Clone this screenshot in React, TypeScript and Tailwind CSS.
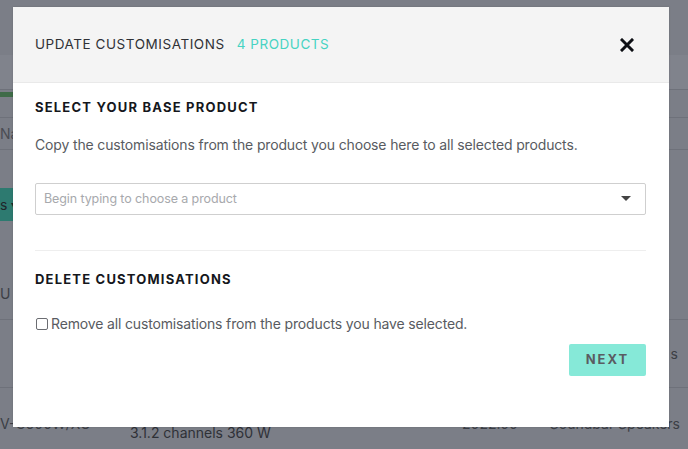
import React from "react";

export default function App() {
  return (
    <div className="relative w-[688px] h-[449px] overflow-hidden bg-[#7b7e87]" style={{ fontFamily: "Inter, 'Noto Sans', sans-serif" }}>
      {/* dimmed page behind */}
      <div className="flex flex-col text-[#3c3e45]">
        <div className="h-[55px]" />
        <div className="h-[35px] bg-[#80838c] border-b border-[#6e717a]" />
        <div className="h-[28px] border-b border-[#6e717a] relative">
          <div className="w-[13px] h-[5px] bg-[#3f6b48] mt-[2px]" />
        </div>
        <div className="h-[32px] border-b border-[#6e717a] flex items-center text-[14px] text-[#4a4c53]">
          <span>Na</span>
        </div>
        <div className="h-[38px]" />
        <div className="h-[33px] w-[20px] bg-[#2d7a70] flex items-center text-[14px] text-[#20252a]">
          <span>s ▾</span>
        </div>
        <div className="h-[60px]" />
        <div className="h-[25px] flex items-center text-[14px]">
          <span>U</span>
        </div>
        <div className="h-[14px] border-b border-[#6e717a]" />
        <div className="h-[68px] border-b border-[#6e717a] flex items-center justify-end text-[14px]">
          <span className="mr-[10px]">s</span>
        </div>
        <div className="h-[61px] flex items-start text-[14px] pt-[25px]">
          <span className="w-[130px]">V-C600W/XU</span>
          <span className="mt-[9px] text-[#2f3137]">3.1.2 channels 360 W</span>
          <span className="ml-auto">2022.00</span>
          <span className="ml-[32px] mr-[8px]">Soundbar Speakers</span>
        </div>
      </div>

      {/* modal */}
      <div className="absolute left-[13px] top-[7px] w-[656px] h-[420px] bg-white flex flex-col shadow-[0_0_2px_rgba(0,0,0,0.15)]">
        <div className="h-[76px] bg-[#f4f4f4] border-b border-[#e9e9e9] flex items-center pl-[22px] pr-[35px] shrink-0">
          <span className="text-[13.5px] tracking-[0.55px] text-[#2f3136]">UPDATE CUSTOMISATIONS</span>
          <span className="text-[13.5px] tracking-[0.55px] text-[#46d3c2] ml-[12px]">4 PRODUCTS</span>
          <svg className="ml-auto" width="14" height="14" viewBox="0 0 14 14">
            <path d="M2 2 L12 12 M12 2 L2 12" stroke="#0d0f14" strokeWidth="3" strokeLinecap="square" />
          </svg>
        </div>
        <div className="flex flex-col px-[22px] pr-[23px]">
          <div className="mt-[16px] text-[13px] font-bold tracking-[1.2px] text-[#15171c] leading-[16px]">SELECT YOUR BASE PRODUCT</div>
          <div className="mt-[20px] text-[14px] tracking-[-0.15px] text-[#585b61] leading-[20px]">Copy the customisations from the product you choose here to all selected products.</div>
          <div className="mt-[28px] h-[32px] border border-[#cfcfcf] rounded-[2px] flex items-center pl-[8px] pr-[14px]">
            <span className="text-[12.5px] text-[#a7a9ad] tracking-[-0.1px] mt-[1px]">Begin typing to choose a product</span>
            <svg className="ml-auto" width="10" height="6" viewBox="0 0 10 6">
              <path d="M0 0 L10 0 L5 5 Z" fill="#444" />
            </svg>
          </div>
          <div className="mt-[35px] h-px bg-[#eeeeee]" />
          <div className="mt-[20px] text-[13px] font-bold tracking-[1.2px] text-[#15171c] leading-[16px]">DELETE CUSTOMISATIONS</div>
          <label className="mt-[27px] flex items-center text-[14px] tracking-[-0.15px] text-[#585b61] leading-[20px]">
            <span className="w-[12px] h-[12px] border border-[#6b6d72] rounded-[2px] ml-[1px] mr-[3px] bg-white" />
            Remove all customisations from the products you have selected.
          </label>
          <div className="mt-[10px] flex justify-end">
            <button className="w-[77px] h-[32px] bg-[#86e9d8] rounded-[2px] text-[13px] font-bold tracking-[2px] text-[#5a5c62]">NEXT</button>
          </div>
        </div>
      </div>
    </div>
  );
}
